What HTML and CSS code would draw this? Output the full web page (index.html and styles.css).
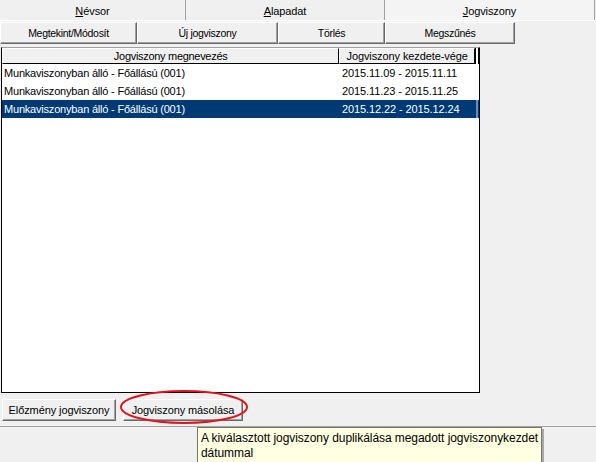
FILE: index.html
```html
<!DOCTYPE html>
<html lang="hu">
<head>
<meta charset="utf-8">
<title>Jogviszony</title>
<link rel="stylesheet" href="styles.css">
</head>
<body>
<div class="window">
  <div class="tabs">
    <div class="tab t1"><span><u>N</u>évsor</span></div>
    <div class="tab t2"><span><u>A</u>lapadat</span></div>
    <div class="tab t3 active"><span><u>J</u>ogviszony</span></div>
  </div>
  <div class="toolbar">
    <div class="btn b1">Megtekint/Módosít</div>
    <div class="btn b2">Új jogviszony</div>
    <div class="btn b3">Törlés</div>
    <div class="btn b4">Megszűnés</div>
  </div>
  <div class="list">
    <div class="head">
      <div class="hcell c1">Jogviszony megnevezés</div>
      <div class="hcell c2">Jogviszony kezdete-vége</div>
      <div class="hgrip"></div>
    </div>
    <div class="row"><div class="cell c1">Munkaviszonyban álló - Főállású (001)</div><div class="cell c2">2015.11.09 - 2015.11.11</div></div>
    <div class="row"><div class="cell c1">Munkaviszonyban álló - Főállású (001)</div><div class="cell c2">2015.11.23 - 2015.11.25</div></div>
    <div class="row sel"><div class="cell c1">Munkaviszonyban álló - Főállású (001)</div><div class="cell c2">2015.12.22 - 2015.12.24</div><div class="selbar"></div></div>
  </div>
  <div class="bottom">
    <div class="btn bb1">Előzmény jogviszony</div>
    <div class="btn bb2">Jogviszony másolása</div>
  </div>
  <div class="status"></div>
  <svg class="circle" width="134" height="40" viewBox="0 0 134 40"><ellipse cx="66" cy="19" rx="63" ry="16" fill="none" stroke="#e0141e" stroke-width="2"/></svg>
  <div class="tooltip">A kiválasztott jogviszony duplikálása megadott jogviszonykezdet<br>dátummal</div>
</div>
</body>
</html>
```
FILE: styles.css
```css
html, body {
  margin: 0;
  padding: 0;
  background: #f0f0f0;
}
.window {
  position: relative;
  width: 596px;
  height: 462px;
  overflow: hidden;
  font-family: "Liberation Sans", Arial, sans-serif;
  font-size: 11px;
  color: #000;
}
.tabs {
  display: flex;
  height: 20px;
  border-bottom: 1px solid #fff;
}
.tab {
  display: flex;
  align-items: center;
  justify-content: center;
  height: 20px;
  box-sizing: border-box;
  border-right: 1px solid #a0a0a0;
  letter-spacing: -0.1px;
}
.tab span { position: relative; top: 1px; }
.tab u { text-decoration: underline; }
.t1 { width: 186px; }
.t2 { width: 199px; }
.t3 { width: 210px; background: #f4f4f4; }
.toolbar {
  display: flex;
  height: 22px;
  margin-top: 1px;
}
.btn {
  display: flex;
  align-items: center;
  justify-content: center;
  box-sizing: border-box;
  border-top: 1px solid #fff;
  border-left: 1px solid #fff;
  border-right: 1px solid #696969;
  border-bottom: 1px solid #696969;
  box-shadow: inset -1px -1px 0 #a0a0a0;
  background: #f0f0f0;
  white-space: nowrap;
}
.toolbar .btn {
  font-size: 10.5px;
  letter-spacing: -0.3px;
}
.b1 { width: 137px; }
.b2 { width: 141px; }
.b3 { width: 107px; }
.b4 { width: 130px; }
.list {
  margin: 3px 0 0 1px;
  width: 479px;
  height: 346px;
  box-sizing: border-box;
  border: 1px solid #000;
  border-top-color: #a0a0a0;
  background: #fff;
}
.head {
  display: flex;
  height: 16px;
  background: #f0f0f0;
}
.hcell {
  box-sizing: border-box;
  height: 16px;
  line-height: 14px;
  text-align: center;
  border-right: 1px solid #000;
  border-bottom: 1px solid #000;
  border-top: 1px solid #fff;
  border-left: 1px solid #fff;
  white-space: nowrap;
}
.head .c1 { width: 338px; letter-spacing: -0.3px; }
.head .c2 { width: 136px; letter-spacing: -0.1px; }
.hgrip {
  width: 4px;
  height: 16px;
  box-sizing: border-box;
  border-left: 1px solid #000;
  border-right: 1px solid #000;
  background: #fff;
}
.row {
  display: flex;
  height: 18px;
  align-items: center;
  font-size: 11px;
  letter-spacing: -0.2px;
}
.cell { white-space: nowrap; }
.row .c1 { width: 338px; padding-left: 2px; box-sizing: border-box; }
.row .c2 { width: 136px; padding-left: 2px; box-sizing: border-box; letter-spacing: -0.1px; }
.row.sel {
  background: #003a75;
  color: #fff;
  width: 477px;
}
.selbar {
  width: 2px;
  height: 18px;
  background: #5b8fce;
}
.bottom {
  display: flex;
  gap: 7px;
  margin: 6px 0 0 2px;
  height: 22px;
}
.bottom .btn {
  font-size: 11px;
  letter-spacing: -0.1px;
}
.bb1 { width: 114px; }
.bb2 { width: 120px; }
.status {
  margin-top: 5px;
  border-top: 1px solid #a0a0a0;
  height: 40px;
}
.circle {
  position: absolute;
  left: 118px;
  top: 388px;
}
.tooltip {
  position: absolute;
  left: 197px;
  top: 427px;
  width: 345px;
  height: 40px;
  box-sizing: border-box;
  padding: 3px 0 0 3px;
  background: #ffffe1;
  border: 1px solid #767676;
  box-shadow: 2px 2px 0 #a8a8a8;
  font-family: "Liberation Sans", Arial, sans-serif;
  font-size: 12px;
  line-height: 15px;
  letter-spacing: -0.06px;
  white-space: nowrap;
}
```
